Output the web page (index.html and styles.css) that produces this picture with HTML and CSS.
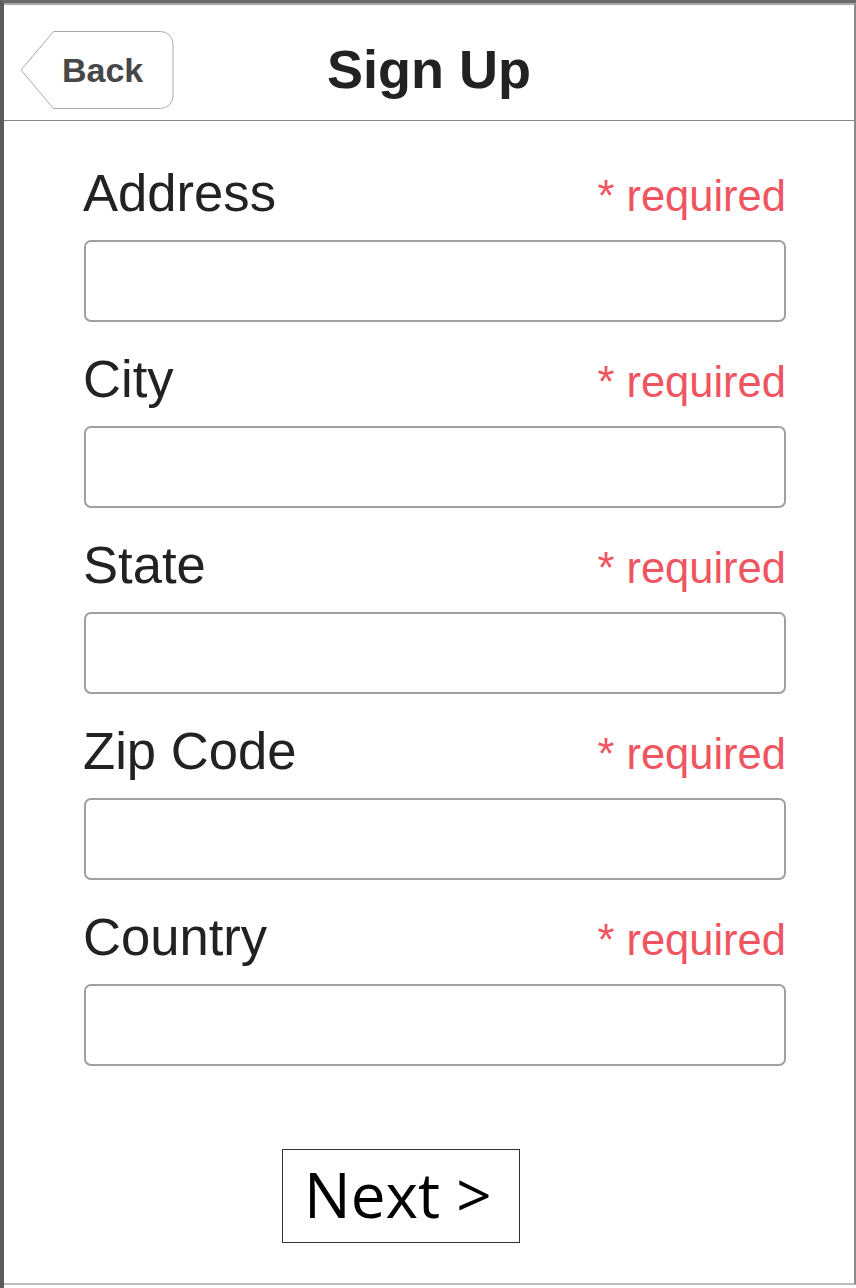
FILE: index.html
```html
<!DOCTYPE html>
<html>
<head>
<meta charset="utf-8">
<link rel="stylesheet" href="styles.css">
</head>
<body>
<div class="phone">
  <div class="screen">
    <header class="header">
      <div class="back">
        <svg class="back-shape" width="154" height="78" viewBox="0 0 154 78">
          <path d="M33.5 0.5 H140.5 A12.5 12.5 0 0 1 153 13 V65 A12.5 12.5 0 0 1 140.5 77.5 H33.5 L1 39 Z" fill="#fff" stroke="#aaa" stroke-width="1"/>
        </svg>
        <span class="back-text">Back</span>
      </div>
      <h1 class="title">Sign Up</h1>
      <div class="spacer"></div>
    </header>
    <main class="form">
      <div class="field">
        <div class="field-head"><span class="label">Address</span><span class="req">* required</span></div>
        <div class="input"></div>
      </div>
      <div class="field">
        <div class="field-head"><span class="label">City</span><span class="req">* required</span></div>
        <div class="input"></div>
      </div>
      <div class="field">
        <div class="field-head"><span class="label">State</span><span class="req">* required</span></div>
        <div class="input"></div>
      </div>
      <div class="field">
        <div class="field-head"><span class="label">Zip Code</span><span class="req">* required</span></div>
        <div class="input"></div>
      </div>
      <div class="field">
        <div class="field-head"><span class="label">Country</span><span class="req">* required</span></div>
        <div class="input"></div>
      </div>
      <div class="actions">
        <div class="next">Next &gt;</div>
      </div>
    </main>
  </div>
</div>
</body>
</html>
```

FILE: styles.css
```css
html, body {
  margin: 0;
  padding: 0;
  background: #fff;
}

.phone {
  width: 856px;
  height: 1288px;
  box-sizing: border-box;
  border-left: 4px solid #5b5b5b;
  border-top: 3px solid #6b6b6b;
  background: #fff;
}

.screen {
  height: 1282px;
  box-sizing: border-box;
  border-top: 2px solid #a8a8a8;
  border-right: 2px solid #8a8a8a;
  border-bottom: 2px solid #bcbcbc;
  display: flex;
  flex-direction: column;
}

.header {
  height: 116px;
  box-sizing: border-box;
  border-bottom: 1px solid #8a8a8a;
  display: grid;
  grid-template-columns: 1fr auto 1fr;
  align-items: start;
}

.back {
  position: relative;
  width: 154px;
  height: 78px;
  margin: 26px 0 0 16px;
}

.back-shape {
  position: absolute;
  left: 0;
  top: 0;
}

.back-text {
  position: relative;
  display: block;
  padding-left: 42px;
  line-height: 78px;
  font-family: "Liberation Sans", Arial, sans-serif;
  font-weight: bold;
  font-size: 34px;
  color: #474747;
}

.title {
  margin: 0;
  font-family: "Liberation Sans", Arial, sans-serif;
  font-weight: bold;
  font-size: 54px;
  color: #222;
  line-height: 62px;
  padding-top: 33px;
}

.form {
  padding: 15px 68px 0 80px;
}

.field {
  padding-top: 28px;
}

.field-head {
  display: flex;
  justify-content: space-between;
  align-items: baseline;
  height: 58px;
  line-height: 58px;
  margin-bottom: 18px;
}

.label {
  margin-left: -1px;
  font-family: "Liberation Sans", Arial, sans-serif;
  font-size: 52.6px;
  color: #222;
}

.req {
  font-family: "Liberation Sans", Arial, sans-serif;
  font-size: 43.5px;
  color: #ef5561;
}

.input {
  height: 82px;
  box-sizing: border-box;
  border: 2px solid #a0a0a0;
  border-radius: 7px;
  background: #fff;
}

.actions {
  padding-top: 83px;
  padding-left: 198px;
}

.next {
  width: 238px;
  height: 94px;
  box-sizing: border-box;
  border: 1px solid #333;
  display: flex;
  align-items: center;
  padding-left: 21px;
  padding-bottom: 4px;
  font-family: "Open Sans", "Noto Sans", sans-serif;
  font-size: 62px;
  color: #000;
  line-height: 1;
}
```
